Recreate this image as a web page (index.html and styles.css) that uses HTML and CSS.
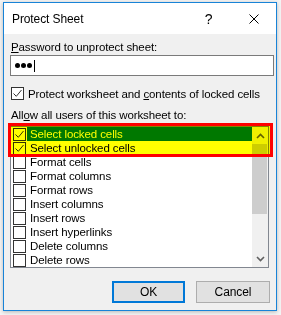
FILE: index.html
```html
<!DOCTYPE html>
<html>

<head>
    <meta charset="utf-8">
    <title>Protect Sheet</title>
    <link rel="stylesheet" href="styles.css">
</head>

<body>
    <div class="window">
        <div class="titlebar">
            <span class="title">Protect Sheet</span>
            <span class="tbtn help">?</span>
            <span class="tbtn close">
                <svg width="10" height="10" viewBox="0 0 10 10"><path d="M0.5 0.5 L9.5 9.5 M9.5 0.5 L0.5 9.5" stroke="#000" stroke-width="1" fill="none"/></svg>
            </span>
        </div>
        <div class="content">
            <div class="label pw-label"><u>P</u>assword to unprotect sheet:</div>
            <div class="pw-input">
                <span class="dot"></span><span class="dot"></span><span class="dot"></span><span class="caret"></span>
            </div>
            <div class="check-row">
                <span class="box checked"></span>
                <span>Protect worksheet and <u>c</u>ontents of locked cells</span>
            </div>
            <div class="label allow-label">All<u>o</u>w all users of this worksheet to:</div>
            <div class="list">
                <div class="rows">
                    <div class="item selected"><span class="box checked"></span><span class="text">Select locked cells</span></div>
                    <div class="item"><span class="box checked"></span><span class="text">Select unlocked cells</span></div>
                    <div class="item"><span class="box"></span><span class="text">Format cells</span></div>
                    <div class="item"><span class="box"></span><span class="text">Format columns</span></div>
                    <div class="item"><span class="box"></span><span class="text">Format rows</span></div>
                    <div class="item"><span class="box"></span><span class="text">Insert columns</span></div>
                    <div class="item"><span class="box"></span><span class="text">Insert rows</span></div>
                    <div class="item"><span class="box"></span><span class="text">Insert hyperlinks</span></div>
                    <div class="item"><span class="box"></span><span class="text">Delete columns</span></div>
                    <div class="item"><span class="box"></span><span class="text">Delete rows</span></div>
                </div>
                <div class="scrollbar">
                    <div class="arrow">
                        <svg width="9" height="6" viewBox="0 0 9 6"><path d="M1 5 L4.5 1.5 L8 5" stroke="#606060" stroke-width="1.6" fill="none"/></svg>
                    </div>
                    <div class="thumb"></div>
                    <div class="track"></div>
                    <div class="arrow">
                        <svg width="9" height="6" viewBox="0 0 9 6"><path d="M1 1 L4.5 4.5 L8 1" stroke="#606060" stroke-width="1.6" fill="none"/></svg>
                    </div>
                </div>
                <div class="mark"></div>
            </div>
            <div class="buttons">
                <div class="btn default">OK</div>
                <div class="btn">Cancel</div>
            </div>
        </div>
    </div>
</body>

</html>
```

FILE: styles.css
```css
html,
body {
    margin: 0;
    width: 100%;
    height: 100%;
    background-color: #f4f4f4;
    font-family: 'Liberation Sans', Arial, sans-serif;
    font-size: 11.5px;
    letter-spacing: -0.1px;
    white-space: nowrap;
    color: #000;
}

.window {
    margin: 2px 0 0 3px;
    width: 272px;
    height: 307px;
    border: solid 1px #1883d7;
    background-color: #f0f0f0;
    box-shadow: 0 1px 4px rgba(0, 0, 0, 0.25);
    display: flex;
    flex-direction: column;
}

.titlebar {
    height: 31px;
    background-color: #fff;
    display: flex;
    align-items: center;
    padding-left: 8px;
    font-size: 12px;
}

.title {
    flex: 1;
}

.tbtn {
    width: 45px;
    height: 31px;
    display: flex;
    align-items: center;
    justify-content: center;
}

.help {
    font-size: 14px;
}

.content {
    flex: 1;
    display: flex;
    flex-direction: column;
    padding: 0 6px 7px 6px;
}

.label {
    line-height: 15px;
    padding-left: 1px;
}

.pw-label {
    margin-top: 6px;
}

.pw-input {
    height: 19px;
    width: 258px;
    border: solid 1px #7a7a7a;
    background-color: #fff;
    display: flex;
    align-items: center;
    padding-left: 4px;
    gap: 1px;
}

.dot {
    width: 5px;
    height: 5px;
    border-radius: 50%;
    background-color: #000;
}

.caret {
    width: 1px;
    height: 12px;
    background-color: #000;
    margin-left: 1px;
}

.check-row {
    margin-top: 10px;
    height: 15px;
    display: flex;
    align-items: center;
    padding-left: 1px;
    gap: 4px;
}

.box {
    width: 11px;
    height: 11px;
    border: solid 1px #333;
    background-color: #fff;
    flex: none;
    position: relative;
}

.box.checked::after {
    content: "";
    position: absolute;
    left: 1px;
    top: 1px;
    width: 9px;
    height: 9px;
    background: url("data:image/svg+xml;utf8,<svg xmlns='http://www.w3.org/2000/svg' width='9' height='9'><path d='M0.5 4.5 L3.3 7.3 L8.5 1' stroke='%23333' stroke-width='1' fill='none'/></svg>");
}

.allow-label {
    margin-top: 7px;
}

.list {
    margin-top: 3px;
    width: 257px;
    height: 140px;
    border: solid 1px #828790;
    background-color: #fff;
    display: flex;
    position: relative;
}

.rows {
    flex: 1;
    overflow: hidden;
}

.item {
    height: 14px;
    display: flex;
    align-items: center;
    padding-left: 2px;
}

.item .text {
    flex: 1;
    line-height: 14px;
    padding-left: 3px;
    margin-left: 1px;
}

.item.selected .text {
    background-color: #0078d7;
    color: #fff;
}

.scrollbar {
    width: 16px;
    background-color: #f0f0f0;
    display: flex;
    flex-direction: column;
}

.arrow {
    height: 17px;
    display: flex;
    align-items: center;
    justify-content: center;
}

.thumb {
    height: 70px;
    background-color: #cdcdcd;
    margin: 0 1px 0 0;
}

.track {
    flex: 1;
}

.mark {
    position: absolute;
    left: -3px;
    top: -4px;
    width: 259px;
    height: 28px;
    border: solid 3px #f00;
}

.mark::before {
    content: "";
    position: absolute;
    left: 0;
    top: 0;
    right: 0;
    bottom: 0;
    background-color: #ff0;
    mix-blend-mode: multiply;
}

.buttons {
    margin-top: auto;
    display: flex;
    justify-content: flex-end;
    gap: 11px;
    font-size: 12px;
}

.btn {
    width: 72px;
    height: 20px;
    border: solid 1px #adadad;
    background-color: #e1e1e1;
    display: flex;
    align-items: center;
    justify-content: center;
}

.btn.default {
    width: 69px;
    height: 18px;
    border: solid 2px #0078d7;
}
```
